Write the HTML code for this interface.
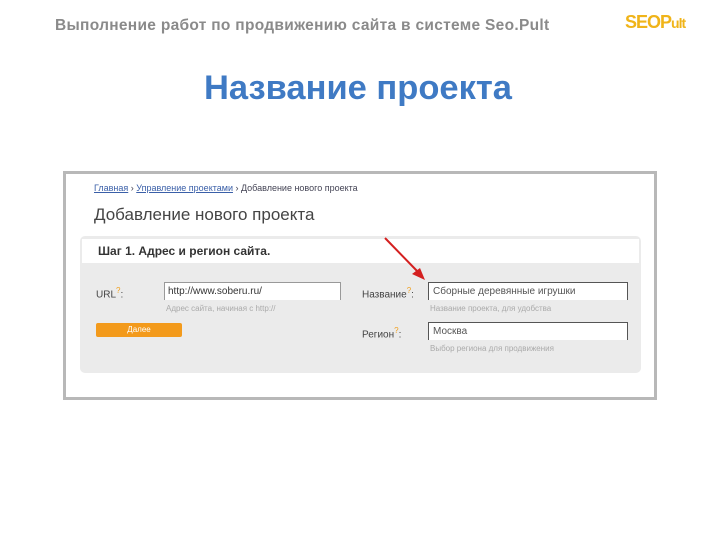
<!DOCTYPE html>
<html><head><meta charset="utf-8"><style>
body{margin:0;width:720px;height:540px;background:#fff;position:relative;overflow:hidden;font-family:"Liberation Sans",sans-serif}
.a{position:absolute;white-space:nowrap}
</style></head><body>
<div class="a" style="left:55px;top:17px;font-size:15.5px;color:#8a8a8a;font-weight:bold;letter-spacing:0.3px">Выполнение работ по продвижению сайта в системе Seo.Pult</div>
<div class="a" style="left:625px;top:12px;font-size:18px;color:#f0b419;font-weight:bold;letter-spacing:-1px">SEOP<span style="font-size:14px">ult</span></div>
<div class="a" style="left:204px;top:69px;font-size:34.5px;color:#3f7ac4;font-weight:bold">Название проекта</div>

<div class="a" style="left:63px;top:171px;width:588px;height:223px;border:3px solid #b8b8b8;background:#fff"></div>
<div class="a" style="left:94px;top:183px;font-size:9px;color:#445;"><u style="color:#3a5fa8">Главная</u> › <u style="color:#3a5fa8">Управление проектами</u> › Добавление нового проекта</div>
<div class="a" style="left:94px;top:205px;font-size:17px;color:#444">Добавление нового проекта</div>
<div class="a" style="left:80px;top:236px;width:561px;height:137px;background:#ebebeb;border-radius:5px"></div>
<div class="a" style="left:82px;top:239px;width:557px;height:24px;background:#fff"></div>
<div class="a" style="left:98px;top:244px;font-size:12px;font-weight:bold;color:#333">Шаг 1. Адрес и регион сайта.</div>

<div class="a" style="left:96px;top:286px;font-size:10px;color:#444">URL<sup style="color:#f0a020;font-size:8px">?</sup>:</div>
<div class="a" style="left:164px;top:282px;width:175px;height:17px;background:#fff;border:1px solid #999;border-width:1px 1px 0 1px"></div>
<div class="a" style="left:168px;top:286px;font-size:10px;color:#333">http://www.soberu.ru/</div>
<div class="a" style="left:166px;top:304px;font-size:8px;color:#aaa">Адрес сайта, начиная с http://</div>
<div class="a" style="left:96px;top:323px;width:86px;height:14px;background:#f39a1b;border-radius:2px;color:#fff;font-size:8px;text-align:center;line-height:14px">Далее</div>

<div class="a" style="left:362px;top:286px;font-size:10px;color:#444">Название<sup style="color:#f0a020;font-size:8px">?</sup>:</div>
<div class="a" style="left:428px;top:282px;width:198px;height:17px;background:#fff;border:1px solid #555;border-width:1px 1px 0 1px"></div>
<div class="a" style="left:433px;top:286px;font-size:10px;color:#555">Сборные деревянные игрушки</div>
<div class="a" style="left:430px;top:304px;font-size:8px;color:#aaa">Название проекта, для удобства</div>
<div class="a" style="left:362px;top:326px;font-size:10px;color:#444">Регион<sup style="color:#f0a020;font-size:8px">?</sup>:</div>
<div class="a" style="left:428px;top:322px;width:198px;height:17px;background:#fff;border:1px solid #555;border-width:1px 1px 0 1px"></div>
<div class="a" style="left:433px;top:326px;font-size:10px;color:#555">Москва</div>
<div class="a" style="left:430px;top:344px;font-size:8px;color:#aaa">Выбор региона для продвижения</div>

<svg class="a" style="left:0;top:0" width="720" height="540"><line x1="385" y1="238" x2="419" y2="273" stroke="#d42020" stroke-width="2"/><polygon points="425,280 412,274 420,268" fill="#d42020"/></svg>
</body></html>
